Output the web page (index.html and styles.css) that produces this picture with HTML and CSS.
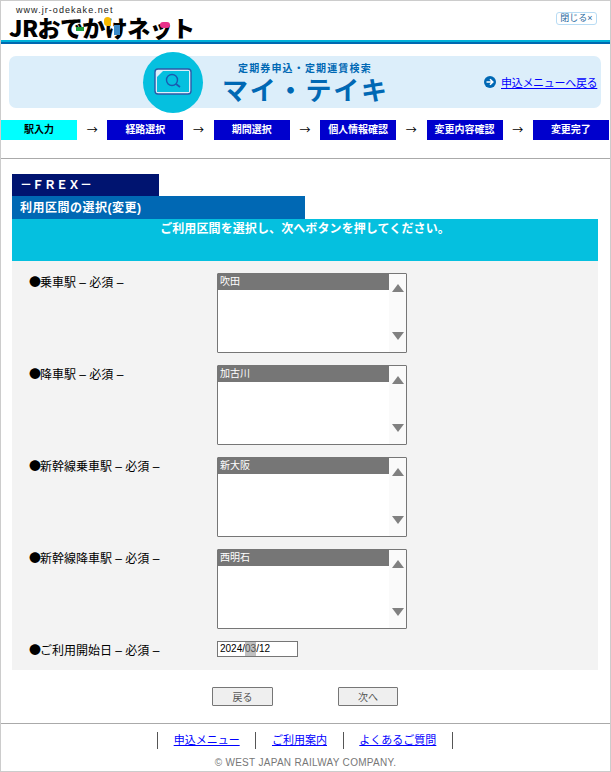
FILE: index.html
```html
<!DOCTYPE html>
<html lang="ja">
<head>
    <meta charset="UTF-8">
    <title>マイ・テイキ</title>
    <link rel="stylesheet" href="styles.css">
</head>
<body>
<div id="wrap">
    <div class="head">
        <div class="logo">
            <div class="logo_url">www.jr-odekake.net</div>
            <div class="logo_name">JRおでかけネット</div>
            <i class="mark green"></i>
            <i class="mark yellow"></i>
            <i class="mark blue"></i>
            <i class="mark pink"></i>
        </div>
        <a class="close_btn">閉じる×</a>
    </div>
    <div class="stripe"></div>

    <div class="banner">
        <div class="banner_icon">
            <svg width="38" height="28" viewBox="0 0 38 28">
                <rect x="1" y="1" width="36" height="25" rx="3" fill="#dceefa" stroke="#2a5aa8" stroke-width="1.4"/>
                <path d="M9 3H35V24H3V9Z" fill="#05c0df"/>
                <circle cx="18" cy="12" r="5.5" fill="none" stroke="#1a5ab0" stroke-width="1.4"/>
                <path d="M22 16L26 19" stroke="#1a5ab0" stroke-width="1.6"/>
            </svg>
        </div>
        <div class="banner_text">
            <div class="banner_sub">定期券申込・定期運賃検索</div>
            <div class="banner_main">マイ・テイキ</div>
        </div>
        <div class="banner_back">
            <svg width="12" height="12" viewBox="0 0 12 12">
                <circle cx="6" cy="6" r="6" fill="#0068b4"/>
                <path d="M2.5 6H8M6 3.2L8.8 6L6 8.8" fill="none" stroke="#fff" stroke-width="1.6"/>
            </svg>
            <a href="#">申込メニューへ戻る</a>
        </div>
    </div>

    <ul class="steps">
        <li class="step now">駅入力</li>
        <li class="arrow">→</li>
        <li class="step">経路選択</li>
        <li class="arrow">→</li>
        <li class="step">期間選択</li>
        <li class="arrow">→</li>
        <li class="step">個人情報確認</li>
        <li class="arrow">→</li>
        <li class="step">変更内容確認</li>
        <li class="arrow">→</li>
        <li class="step">変更完了</li>
    </ul>

    <div class="rule"></div>

    <div class="main">
        <div class="frex">－ＦＲＥＸ－</div>
        <div class="sec_title">利用区間の選択(変更)</div>
        <div class="notice">ご利用区間を選択し、次へボタンを押してください。</div>
        <div class="panel">
            <div class="row">
                <div class="label"><span class="dot">●</span>乗車駅 – 必須 –</div>
                <div class="listbox">
                    <div class="list"><div class="opt">吹田</div></div>
                    <div class="bar"><i class="up"></i><i class="down"></i></div>
                </div>
            </div>
            <div class="row">
                <div class="label"><span class="dot">●</span>降車駅 – 必須 –</div>
                <div class="listbox">
                    <div class="list"><div class="opt">加古川</div></div>
                    <div class="bar"><i class="up"></i><i class="down"></i></div>
                </div>
            </div>
            <div class="row">
                <div class="label"><span class="dot">●</span>新幹線乗車駅 – 必須 –</div>
                <div class="listbox">
                    <div class="list"><div class="opt">新大阪</div></div>
                    <div class="bar"><i class="up"></i><i class="down"></i></div>
                </div>
            </div>
            <div class="row">
                <div class="label"><span class="dot">●</span>新幹線降車駅 – 必須 –</div>
                <div class="listbox">
                    <div class="list"><div class="opt">西明石</div></div>
                    <div class="bar"><i class="up"></i><i class="down"></i></div>
                </div>
            </div>
            <div class="row last">
                <div class="label"><span class="dot">●</span>ご利用開始日 – 必須 –</div>
                <div class="datebox">2024/<span class="sel">03</span>/12</div>
            </div>
        </div>
        <div class="btns">
            <button>戻る</button>
            <button>次へ</button>
        </div>
    </div>

    <div class="foot">
        <ul class="foot_links">
            <li><a href="#">申込メニュー</a></li>
            <li><a href="#">ご利用案内</a></li>
            <li><a href="#">よくあるご質問</a></li>
        </ul>
        <div class="copy">© WEST JAPAN RAILWAY COMPANY.</div>
    </div>
</div>
</body>
</html>
```

FILE: styles.css
```css
*{
    padding: 0;
    margin: 0;
    box-sizing: border-box;
}
body{
    background: #fff;
    font-family: "Liberation Sans", "Noto Sans CJK JP", sans-serif;
    color: #000;
}
ul{
    list-style: none;
}

#wrap{
    width: 611px;
    height: 772px;
    border: 1px solid #ccc;
    overflow: hidden;
}

.head{
    height: 39px;
    display: flex;
    justify-content: space-between;
    padding: 4px 13px 0 8px;
}
.stripe{
    height: 4px;
    border-top: 2px solid #00b0d8;
    background: #0068b0;
}
.logo{
    position: relative;
    width: 190px;
}
.logo_url{
    font-size: 9px;
    line-height: 11px;
    letter-spacing: 1.05px;
    padding-left: 7px;
    color: #222;
}
.logo_name{
    font-family: "Noto Sans CJK JP", sans-serif;
    font-weight: 900;
    font-size: 23px;
    line-height: 22px;
    letter-spacing: -0.6px;
    white-space: nowrap;
}
.mark{
    position: absolute;
    display: block;
}
.mark.green{
    left: 67px;
    top: 22px;
    width: 8px;
    height: 4px;
    background: #1a9a3a;
}
.mark.yellow{
    left: 95px;
    top: 12px;
    width: 7px;
    height: 9px;
    border-radius: 5px 5px 1px 5px;
    background: #f5b800;
}
.mark.blue{
    left: 105px;
    top: 20px;
    width: 6px;
    height: 10px;
    background: #3a8ac8;
}
.mark.pink{
    left: 151px;
    top: 17px;
    width: 10px;
    height: 6px;
    border-radius: 3px;
    background: #e8308a;
}
.close_btn{
    margin-top: 7px;
    width: 41px;
    height: 13px;
    border: 1px solid #b8dcf4;
    border-radius: 3px;
    font-size: 9px;
    line-height: 11px;
    text-align: center;
    color: #2a6aa0;
}

.banner{
    width: 592px;
    height: 52px;
    margin: 12px 0 0 8px;
    padding: 0 3px 0 134px;
    background: #dceefa;
    border-radius: 7px;
    display: flex;
    align-items: center;
}
.banner_icon{
    width: 60px;
    height: 61px;
    border-radius: 50%;
    background: #05c0df;
    display: flex;
    align-items: center;
    justify-content: center;
    flex: none;
}
.banner_text{
    margin-left: 19px;
    width: 262px;
    flex: none;
    color: #0068b4;
    font-family: "Noto Sans CJK JP", sans-serif;
}
.banner_sub{
    font-size: 10px;
    line-height: 13px;
    font-weight: 700;
    letter-spacing: 1.15px;
    padding-left: 16px;
}
.banner_main{
    font-size: 26px;
    line-height: 30px;
    font-weight: 700;
    letter-spacing: 1.8px;
}
.banner_back{
    display: flex;
    align-items: center;
    gap: 5px;
    font-size: 11px;
    letter-spacing: -0.3px;
    white-space: nowrap;
}
.banner_back a, .foot_links a{
    color: #00f;
    text-decoration: underline;
}

.steps{
    display: flex;
    margin-top: 12px;
    height: 20px;
    padding-right: 1px;
    justify-content: space-between;
}
.step{
    width: 76px;
    background: #0000cd;
    color: #fff;
    font-size: 10px;
    font-weight: 700;
    line-height: 20px;
    text-align: center;
}
.step.now{
    background: #0ff;
    color: #000;
}
.arrow{
    width: 30px;
    font-family: "Noto Sans CJK JP", sans-serif;
    font-size: 11px;
    line-height: 18px;
    text-align: center;
}

.rule{
    height: 1px;
    margin-top: 18px;
    background: #aaa;
}

.main{
    padding: 15px 12px 0 11px;
}
.frex{
    width: 147px;
    height: 22px;
    background: #001470;
    color: #fff;
    font-size: 12px;
    font-weight: 700;
    line-height: 22px;
    padding-left: 8px;
    overflow: hidden;
}
.sec_title{
    width: 293px;
    height: 23px;
    background: #0068b4;
    color: #fff;
    font-size: 12px;
    font-weight: 700;
    line-height: 24px;
    letter-spacing: 0.5px;
    padding-left: 8px;
}
.notice{
    height: 42px;
    background: #05c0df;
    color: #fff;
    font-size: 12px;
    font-weight: 700;
    line-height: 21px;
    letter-spacing: 0.1px;
    text-align: center;
}
.panel{
    height: 409px;
    background: #f3f3f3;
    padding: 12px 0 0 17px;
}
.row{
    display: flex;
    margin-bottom: 12px;
}
.row.last{
    margin-bottom: 0;
}
.label{
    width: 188px;
    font-size: 12px;
    line-height: 18px;
}
.dot{
    font-family: "Noto Sans CJK JP", sans-serif;
    margin-right: -1px;
}
.listbox{
    width: 190px;
    height: 80px;
    border: 1px solid #767676;
    border-radius: 1px;
    background: #fff;
    display: flex;
}
.list{
    flex: 1;
}
.opt{
    height: 16px;
    background: #767676;
    color: #fff;
    font-size: 10px;
    line-height: 16px;
    padding-left: 2px;
}
.bar{
    width: 17px;
    background: #fafafa;
    display: flex;
    flex-direction: column;
    justify-content: space-between;
    align-items: center;
    padding: 10px 0 12px;
}
.bar i{
    display: block;
    border-left: 6px solid transparent;
    border-right: 6px solid transparent;
}
.bar .up{
    border-bottom: 8px solid #808080;
}
.bar .down{
    border-top: 8px solid #808080;
}
.datebox{
    width: 81px;
    height: 16px;
    border: 1px solid #767676;
    background: #fff;
    font-size: 10px;
    line-height: 14px;
    padding-left: 2px;
}
.sel{
    display: inline-block;
    background: #c0c0c0;
    color: #555;
}

.btns{
    display: flex;
    gap: 65px;
    margin: 17px 0 0 200px;
}
.btns button{
    width: 61px;
    height: 19px;
    border: 1px solid #767676;
    border-radius: 1px;
    background: #efefef;
    color: #555;
    font-family: inherit;
    font-size: 10px;
}
.btns button:last-child{
    width: 60px;
}

.foot{
    margin-top: 17px;
    border-top: 1px solid #aaa;
    padding-top: 8px;
}
.foot_links{
    display: flex;
    justify-content: center;
    width: 296px;
    margin-left: 156px;
    border-left: 1px solid #555;
}
.foot_links li{
    flex: auto;
    height: 17px;
    border-right: 1px solid #555;
    font-size: 11px;
    line-height: 16px;
    text-align: center;
}
.copy{
    margin-top: 7px;
    text-align: center;
    font-size: 10px;
    line-height: 14px;
    letter-spacing: 0.3px;
    color: #777;
}
```
